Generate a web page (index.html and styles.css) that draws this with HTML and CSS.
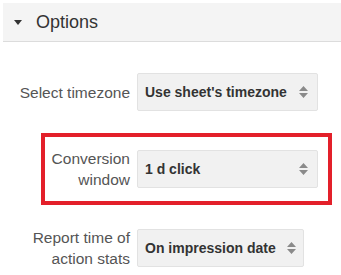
FILE: index.html
```html
<!DOCTYPE html>
<html lang="en">
<head>
    <meta charset="UTF-8">
    <title>Options</title>
    <link rel="stylesheet" href="styles.css">
</head>
<body>
    <div class="panel">
        <div class="panel-header">
            <span class="caret"></span>
            <span class="panel-title">Options</span>
        </div>

        <div class="options">
            <div class="row">
                <label class="row-label">Select timezone</label>
                <div class="select select-tz">
                    <span class="select-value">Use sheet's timezone</span>
                    <svg class="arrows" width="9" height="12" viewBox="0 0 9 12"><path d="M4.5 0 L9 5 H0 Z M0 7 H9 L4.5 12 Z" fill="#8a8a8a"/></svg>
                </div>
            </div>

            <div class="row highlight">
                <label class="row-label">Conversion window</label>
                <div class="select select-conv">
                    <span class="select-value">1 d click</span>
                    <svg class="arrows" width="9" height="12" viewBox="0 0 9 12"><path d="M4.5 0 L9 5 H0 Z M0 7 H9 L4.5 12 Z" fill="#8a8a8a"/></svg>
                </div>
            </div>

            <div class="row">
                <label class="row-label">Report time of action stats</label>
                <div class="select select-report">
                    <span class="select-value">On impression date</span>
                    <svg class="arrows" width="9" height="12" viewBox="0 0 9 12"><path d="M4.5 0 L9 5 H0 Z M0 7 H9 L4.5 12 Z" fill="#8a8a8a"/></svg>
                </div>
            </div>
        </div>
    </div>
</body>
</html>
```

FILE: styles.css
```css
body {
    margin: 0;
    background: #fff;
    font-family: "Liberation Sans", Arial, sans-serif;
    color: #444;
}

.panel {
    padding: 3px 0 0 3px;
}

.panel-header {
    display: flex;
    align-items: center;
    height: 38px;
    background: #f4f4f4;
    border-bottom: 1px solid #dcdcdc;
}

.caret {
    width: 0;
    height: 0;
    margin-left: 11px;
    margin-right: 14px;
    border-left: 4px solid transparent;
    border-right: 4px solid transparent;
    border-top: 5px solid #333;
}

.panel-title {
    font-size: 18px;
    color: #333;
}

.options {
    display: flex;
    flex-direction: column;
    gap: 37px;
    margin-top: 31px;
    padding-left: 14px;
}

.row {
    position: relative;
    display: flex;
    align-items: center;
    gap: 7px;
}

.row-label {
    width: 113px;
    font-size: 15.5px;
    line-height: 21px;
    text-align: right;
    color: #555;
}

.select {
    display: flex;
    align-items: center;
    justify-content: space-between;
    box-sizing: border-box;
    height: 38px;
    padding: 0 9px 0 7px;
    background: #f1f1f1;
    border: 1px solid #e2e2e2;
    border-radius: 2px;
    font-size: 14px;
    font-weight: bold;
    color: #333;
}

.select-tz,
.select-conv {
    width: 181px;
}

.select-report {
    width: 167px;
    padding-right: 7px;
}

.arrows {
    flex-shrink: 0;
}

/* red annotation drawn over the conversion window row */
.highlight::after {
    content: "";
    position: absolute;
    top: -15px;
    bottom: -15px;
    left: 24px;
    width: 291px;
    box-sizing: border-box;
    border: 4px solid #e3202a;
    pointer-events: none;
}
```
